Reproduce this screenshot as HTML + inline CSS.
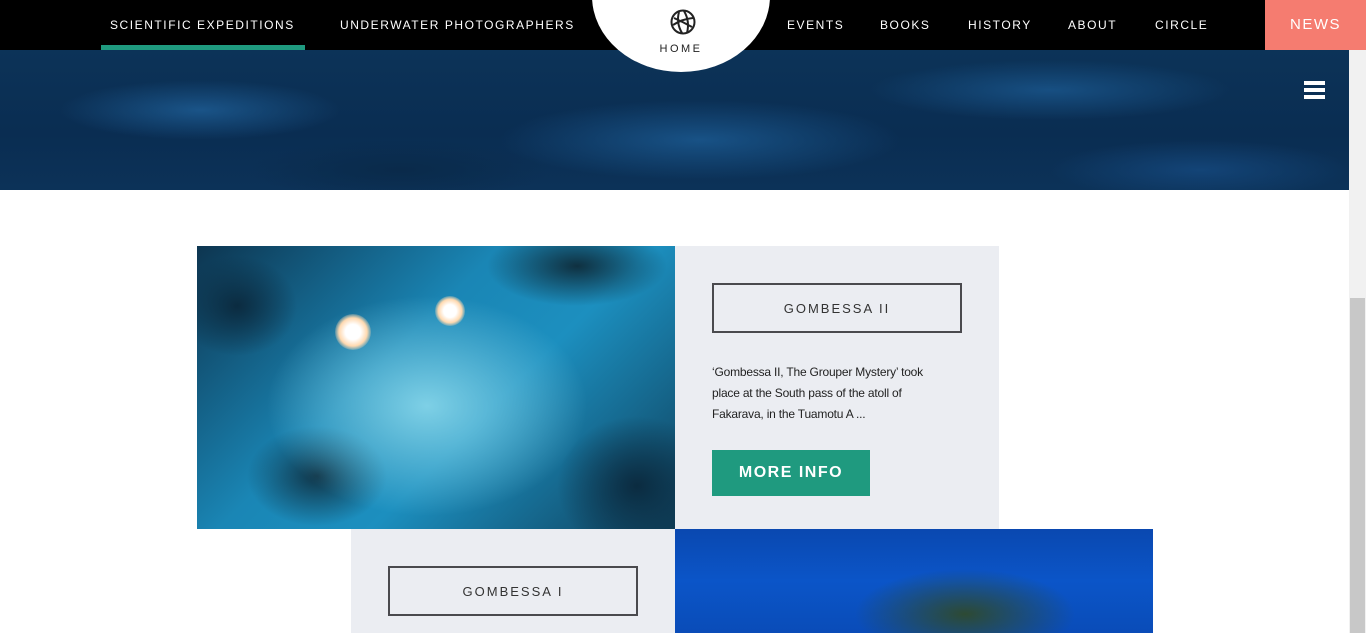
<!DOCTYPE html>
<html><head><meta charset="utf-8"><style>
*{margin:0;padding:0;box-sizing:border-box}
body{width:1366px;height:633px;overflow:hidden;background:#fff;font-family:"Liberation Sans",sans-serif;position:relative}
.nav{position:absolute;left:0;top:0;width:1366px;height:50px;background:#000}
.nav a{position:absolute;top:18px;color:#fff;font-size:12px;letter-spacing:1.55px;text-decoration:none;white-space:nowrap}
.ul{position:absolute;left:101px;top:45px;width:204px;height:5px;background:#1f9a7f}
.news{position:absolute;left:1265px;top:0;width:101px;height:50px;background:#f57c70;color:#fff;font-size:15px;letter-spacing:1.5px;text-align:center;line-height:50px}
.circle{position:absolute;left:592px;top:-80px;width:178px;height:152px;border-radius:50%;background:#fff;z-index:3}
.home{position:absolute;left:592px;top:43px;width:178px;text-align:center;font-size:11px;letter-spacing:2.5px;color:#222;z-index:4}
.hero{position:absolute;left:0;top:50px;width:1349px;height:140px;background:
radial-gradient(ellipse 140px 30px at 200px 60px,#1a5488,transparent),
radial-gradient(ellipse 200px 40px at 700px 90px,#185286,transparent),
radial-gradient(ellipse 180px 30px at 1050px 40px,#174f82,transparent),
radial-gradient(ellipse 150px 30px at 400px 120px,#0a2a4a,transparent),
radial-gradient(ellipse 150px 30px at 1200px 120px,#134477,transparent),
linear-gradient(180deg,#0c3358,#0a2d52 60%,#0c3258)}
.burger{position:absolute;left:1304px;top:81px;width:21px;z-index:2}
.burger i{display:block;height:4px;background:#fff;margin-bottom:3px}
.sb{position:absolute;left:1349px;top:50px;width:17px;height:583px;background:#f1f1f1}
.thumb{position:absolute;left:1350px;top:298px;width:15px;height:335px;background:#c8c8c8}
.img1{position:absolute;left:197px;top:246px;width:478px;height:283px;background:
radial-gradient(ellipse 160px 110px at 230px 160px,#7ed0e6,transparent),
radial-gradient(ellipse 60px 50px at 40px 60px,#0b2b40,transparent),
radial-gradient(ellipse 80px 70px at 440px 240px,#0b2b40,transparent),
radial-gradient(ellipse 70px 50px at 120px 230px,#103548,transparent),
radial-gradient(ellipse 90px 40px at 380px 20px,#0f3040,transparent),
linear-gradient(135deg,#0d3550,#1a86b5 40%,#1c8fbf 60%,#0f3f5a)}
.light{position:absolute;border-radius:50%;background:radial-gradient(circle,#fff 30%,#ffd9b0 55%,transparent 75%)}
.card1{position:absolute;left:675px;top:246px;width:324px;height:283px;background:#ebedf2}
.card2{position:absolute;left:351px;top:529px;width:324px;height:104px;background:#ebedf2}
.btn{position:absolute;border:2px solid #4a4a4e;width:250px;height:50px;text-align:center;line-height:47px;font-size:13px;letter-spacing:2px;color:#333}
.txt{position:absolute;left:37px;top:116px;width:280px;font-size:12px;line-height:21px;color:#222;letter-spacing:-0.2px;white-space:nowrap}
.more{position:absolute;left:37px;top:204px;width:158px;height:46px;background:#1f9a7f;color:#fff;font-weight:bold;font-size:16px;letter-spacing:1.5px;text-align:center;line-height:46px}
.img2{position:absolute;left:675px;top:529px;width:478px;height:104px;background:
radial-gradient(ellipse 110px 45px at 290px 85px,#2d4a33,transparent),
linear-gradient(180deg,#0a48b0,#0b55c8 50%,#0a4cb8)}
</style></head><body>
<div class="nav">
<a style="left:110px">SCIENTIFIC EXPEDITIONS</a>
<a style="left:340px">UNDERWATER PHOTOGRAPHERS</a>
<a style="left:787px">EVENTS</a>
<a style="left:880px">BOOKS</a>
<a style="left:968px">HISTORY</a>
<a style="left:1068px">ABOUT</a>
<a style="left:1155px">CIRCLE</a>
<div class="ul"></div>
<div class="news">NEWS</div>
</div>
<div class="hero"></div>
<div class="circle"></div>
<svg style="position:absolute;left:670px;top:9px;z-index:4" width="26" height="26" viewBox="0 0 26 26" fill="none" stroke="#222" stroke-width="2"><circle cx="13" cy="13" r="11.5"/><path d="M4 9 Q13 13 22 18 M9 3 Q6 14 12 24 M14 2 Q20 12 17 24 M3 16 Q12 10 23 9"/></svg>
<div class="home">HOME</div>
<div class="burger"><i></i><i></i><i></i></div>
<div class="sb"></div><div class="thumb"></div>
<div class="img1"><div class="light" style="left:138px;top:68px;width:36px;height:36px"></div><div class="light" style="left:238px;top:50px;width:30px;height:30px"></div></div>
<div class="card1"><div class="btn" style="left:37px;top:37px">GOMBESSA II</div>
<div class="txt">‘Gombessa II, The Grouper Mystery’ took<br>place at the South pass of the atoll of<br>Fakarava, in the Tuamotu A ...</div>
<div class="more">MORE INFO</div></div>
<div class="card2"><div class="btn" style="left:37px;top:37px">GOMBESSA I</div></div>
<div class="img2"></div>
</body></html>
